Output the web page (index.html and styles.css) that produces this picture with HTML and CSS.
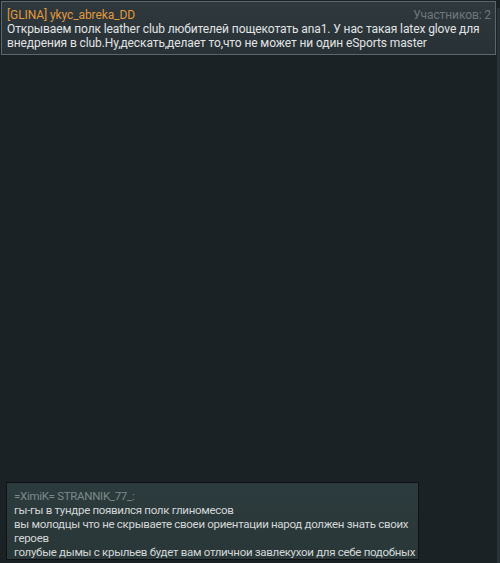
FILE: index.html
```html
<!DOCTYPE html>
<html lang="ru">
<head>
    <meta charset="UTF-8">
    <meta name="viewport" content="width=device-width, initial-scale=1.0">
    <title>Чат полка</title>
    <link rel="stylesheet" href="styles.css">
</head>
<body>
    <div class="chat">
        <div class="topic">
            <div class="topic-head">
                <span class="topic-author">[GLINA] ykyc_abreka_DD</span>
                <span class="topic-count">Участников: 2</span>
            </div>
            <div class="topic-text">Открываем полк leather club любителей пощекотать ana1. У нас такая latex glove для внедрения в club.Ну,дескать,делает то,что не может ни один eSports master</div>
        </div>
        <div class="feed">
            <div class="message">
                <div class="message-author">=XimiK= STRANNIK_77_:</div>
                <div class="message-line">гы-гы в тундре появился полк глиномесов</div>
                <div class="message-line">вы молодцы что не скрываете своеи ориентации народ должен знать своих героев</div>
                <div class="message-line">голубые дымы с крыльев будет вам отличнои завлекухои для себе подобных</div>
            </div>
        </div>
        <div class="scroll"></div>
    </div>
</body>
</html>
```

FILE: styles.css
```css
*{
    margin: 0;
    padding: 0;
    box-sizing: border-box;
}
html, body{
    height: 100%;
}
body{
    background-color: #1b2225;
    font-family: Roboto, "Noto Sans", sans-serif;
    font-size: 11.5px;
    color: #e2e4e4;
    overflow: hidden;
}
.chat{
    position: relative;
    height: 563px;
    display: flex;
    flex-direction: column;
    padding: 1px 4px 3px 1px;
}
.topic{
    background: linear-gradient(#2e383d, #283136);
    border: 1px solid #59686f;
    padding: 6px 4px 4px 5px;
    font-size: 12px;
    letter-spacing: -0.1px;
    line-height: 14px;
}
.topic-head{
    display: flex;
    justify-content: space-between;
}
.topic-author{
    color: #e29a3c;
}
.topic-count{
    color: #70777b;
}
.feed{
    flex: 1;
    display: flex;
    flex-direction: column;
    justify-content: flex-end;
    padding-left: 5px;
}
.message{
    width: 413px;
    background: linear-gradient(#2c3b3d, #2a3739);
    border: 1px solid #0e1214;
    padding: 6px 2px 0 7px;
    line-height: 14px;
    letter-spacing: -0.3px;
    color: #d3d7d7;
}
.message-author{
    color: #7c8a8b;
}
.scroll{
    position: absolute;
    right: 0;
    top: 8px;
    bottom: 0;
    width: 3px;
    background-color: #2a3337;
}
```
